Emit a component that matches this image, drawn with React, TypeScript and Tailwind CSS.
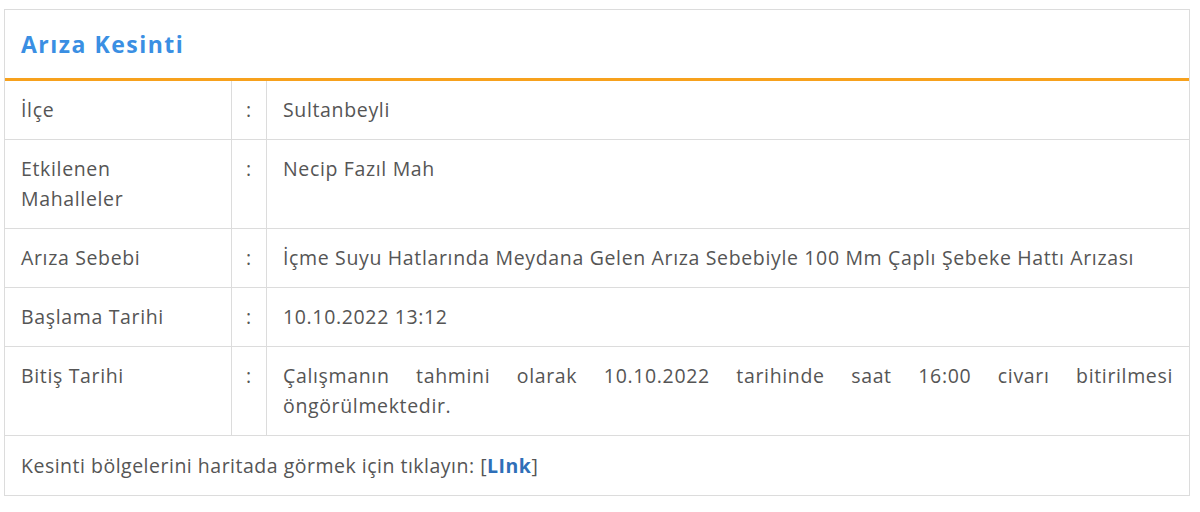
const rows: { label: string; value: string; justify?: boolean }[] = [
  { label: "İlçe", value: "Sultanbeyli" },
  { label: "Etkilenen Mahalleler", value: "Necip Fazıl Mah" },
  {
    label: "Arıza Sebebi",
    value: "İçme Suyu Hatlarında Meydana Gelen Arıza Sebebiyle 100 Mm Çaplı Şebeke Hattı Arızası",
  },
  { label: "Başlama Tarihi", value: "10.10.2022 13:12" },
  {
    label: "Bitiş Tarihi",
    value: "Çalışmanın tahmini olarak 10.10.2022 tarihinde saat 16:00 civarı bitirilmesi öngörülmektedir.",
    justify: true,
  },
];

const App = () => {
  return (
    <div className="bg-white w-[1200px] h-[512px] pt-[9px] pl-[4px] font-['Open_Sans',sans-serif] text-[#555] text-[19.5px] tracking-[0.65px] leading-[30px]">
      <div className="w-[1186px] border border-[#dcdcdc]">
        {/* Header */}
        <div className="h-[71px] flex items-center px-4 border-b-[3px] border-[#f7a11d]">
          <h2 className="text-[23px] font-bold tracking-[1.5px] text-[#3a8fe3]">Arıza Kesinti</h2>
        </div>

        {/* Rows */}
        {rows.map((row) => (
          <div key={row.label} className="grid grid-cols-[227px_35px_1fr] border-b border-[#dcdcdc]">
            <div className="px-4 py-[14px] border-r border-[#dcdcdc]">
              <span className="block max-w-[170px]">{row.label}</span>
            </div>
            <div className="py-[14px] text-center border-r border-[#dcdcdc]">:</div>
            <div className={`pl-4 pr-4 py-[14px] ${row.justify ? "text-justify" : ""}`}>
              {row.value}
            </div>
          </div>
        ))}

        {/* Footer */}
        <div className="px-4 h-[59px] flex items-center">
          <p className="tracking-[0.5px]">
            Kesinti bölgelerini haritada görmek için tıklayın: [
            <a href="#" className="font-bold text-[#2f6fb8]">LInk</a>]
          </p>
        </div>
      </div>
    </div>
  );
};

export default App;
